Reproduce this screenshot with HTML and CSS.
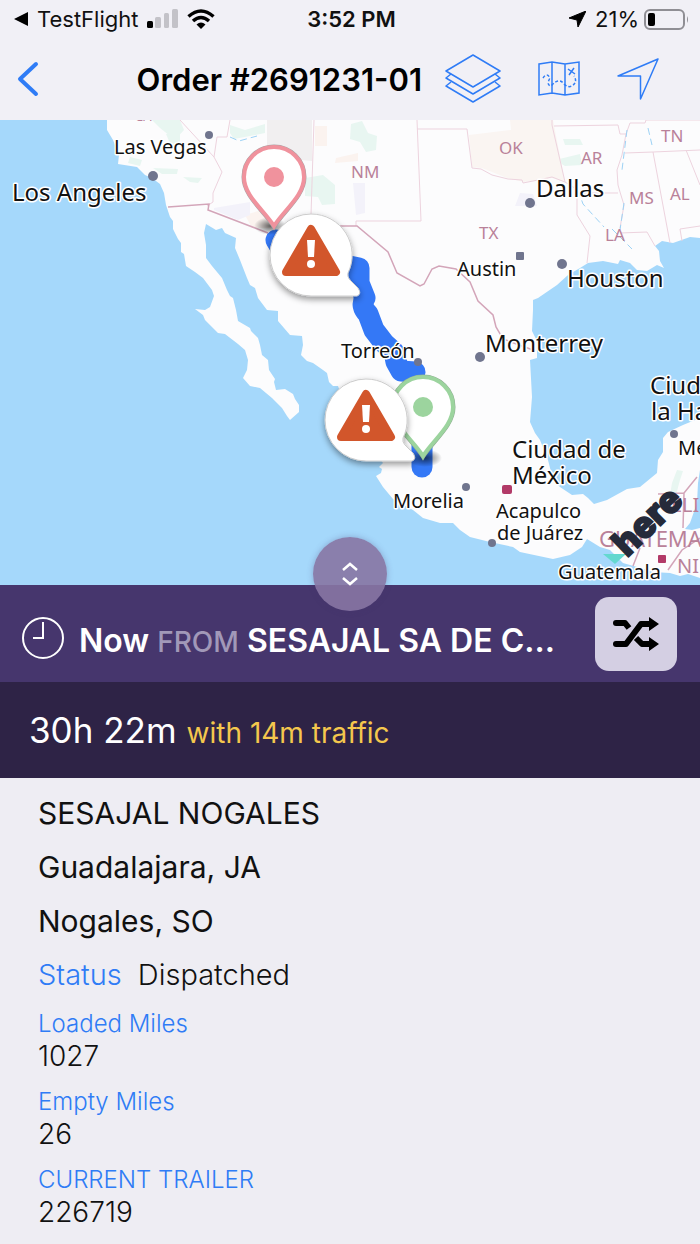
FILE: index.html
```html
<!DOCTYPE html>
<html lang="en">
<head>
    <meta charset="utf-8">
    <meta name="viewport" content="width=device-width, initial-scale=1">
    <title>Order #2691231-01</title>
    <link rel="stylesheet" href="styles.css">
</head>
<body>
    <header class="header">
        <div class="status-bar">
            <div class="status-left">
                <svg width="14" height="14" viewBox="0 0 14 14"><path d="M0 7L14 0V14Z"/></svg>
                <span>TestFlight</span>
                <svg width="31" height="20" viewBox="0 0 31 20">
                    <rect x="0" y="12" width="6" height="7" rx="1.500"/>
                    <g fill="#c3c2c8">
                        <rect x="8" y="8" width="6" height="11" rx="1.500"/>
                        <rect x="17" y="4" width="5" height="15" rx="1.500"/>
                        <rect x="25" y="0" width="6" height="19" rx="1.500"/>
                    </g>
                </svg>
                <svg width="28" height="20" viewBox="0 0 28 20" fill="none" stroke="#000" stroke-width="3.500">
                    <path d="M1.500 7.500Q14 -3.500 26.500 7.500"/>
                    <path d="M6 12Q14 5 22 12"/>
                    <path d="M14 20L9.500 15.500Q14 11.500 18.500 15.500Z" fill="#000" stroke="none"/>
                </svg>
            </div>
            <div class="status-time">3:52 PM</div>
            <div class="status-right">
                <svg width="17" height="16" viewBox="0 0 17 16"><path d="M0 7L17 0L9 16L8 9Z" stroke="#000" stroke-linejoin="round"/></svg>
                <span class="battery">21%
                    <svg width="45" height="21" viewBox="0 0 45 21">
                        <rect x="1" y="1" width="39" height="19" rx="5" fill="none" stroke="#8f8e94" stroke-width="2"/>
                        <rect x="4" y="4" width="7" height="13" rx="2"/>
                        <path d="M43 7Q45 10.500 43 14Z" fill="#8f8e94"/>
                    </svg>
                </span>
            </div>
        </div>
        <nav class="nav">
            <button class="icon-btn" aria-label="Back">
                <svg width="22" height="36" viewBox="0 0 22 36" fill="none" stroke="#2f7cf6" stroke-width="4" stroke-linecap="round" stroke-linejoin="round"><path d="M19 3L3 18L19 33"/></svg>
            </button>
            <h1 class="nav-title">Order #2691231-01</h1>
            <button class="icon-btn" aria-label="Layers">
                <svg width="56" height="50" viewBox="0 0 56 50" fill="none" stroke="#2f7cf6" stroke-width="1.500" stroke-linejoin="round">
                    <path d="M28 1L55 17L28 33L1 17Z"/>
                    <path d="M6 20L1 24L28 40L55 24L50 20"/>
                    <path d="M6 28L1 32L28 48L55 32L50 28"/>
                </svg>
            </button>
            <button class="icon-btn" aria-label="Map">
                <svg width="42" height="36" viewBox="0 0 42 36" fill="none" stroke="#2f7cf6" stroke-width="1.500">
                    <path d="M1 3L14 1L27 3L41 1V32L27 34L14 32L1 34ZM14 1V32M27 3V34"/>
                    <path d="M5 17Q9 11 12 17Q8 24 13 25Q21 16 26 23Q30 27 34 25Q40 21 36 15" stroke-dasharray="3 2"/>
                    <path d="M30 8L37 13M36 7L31 14"/>
                </svg>
            </button>
            <button class="icon-btn" aria-label="Locate">
                <svg width="42" height="42" viewBox="0 0 42 42" fill="none" stroke="#2f7cf6" stroke-width="1.500" stroke-linejoin="round"><path d="M41 1L1 18H23.500V41Z"/></svg>
            </button>
        </nav>
    </header>

    <main>
        <div class="map">
            <svg class="map-canvas" viewBox="0 120 700 465">
                <defs>
                    <filter id="shadow" x="-20%" y="-20%" width="150%" height="150%">
                        <feDropShadow dx="0" dy="3" stdDeviation="3" flood-opacity=".4"/>
                    </filter>
                    <radialGradient id="spot">
                        <stop offset="0" stop-opacity=".6"/>
                        <stop offset="1" stop-opacity="0"/>
                    </radialGradient>
                    <g id="bubble">
                        <path d="M0 -41A41 41 0 0 1 37 18Q36 22 39 25L47 33Q51 39 46 41H0A41 41 0 0 1 0 -41Z" fill="#fff" stroke="#ccc" stroke-width="1" filter="url(#shadow)"/>
                        <path d="M0 -26L25 17H-25Z" fill="#d2562b" stroke="#d2562b" stroke-width="8" stroke-linejoin="round"/>
                        <path d="M-4 -15H4L3 2H-3Z" fill="#fff"/>
                        <circle cx="0" cy="9" r="4" fill="#fff"/>
                    </g>
                    <path id="pin" d="M0 47C-10 31 -30 17 -30 -2A30 30 0 0 1 30 -2C30 17 10 31 0 47Z"/>
                </defs>

                <!-- land -->
                <path class="land" d="M107 119V130L113 140L119 155L118 164L137 167L145 175L152 178L160 184L164 193L166 205L170 217L173 221V229L178 239L181 243V252L184 254L186 266L195 272L203 278L212 290L214 296L210 307L205 310L195 309L203 315L205 320L218 333L225 334L238 344L245 350L248 360L247 370L243 378L250 386L260 388L272 398L282 408L287 416L290 420L299 412V405L295 399L293 394L285 389L276 390L274 382L275 379L269 370L268 360L262 355L260 345L258 338L251 331L250 328L238 321L236 310L233 298L230 296L227 290L222 278L212 266L206 258V245L204 233L206 224L216 230L222 228L225 233L236 238L235 248L240 260L247 278L250 285L255 288L258 298L267 310L278 311V321L290 335L302 336L303 345L301 355L307 361L313 363L323 370L327 373L329 382L333 386H338L350 420L383 463L379 467L382 469L381 473L376 476L383 487L393 499L413 510L423 518L440 523L453 523L460 530L470 537L490 542L513 547L520 552L553 559L570 555L582 547L587 539L600 547L610 550L623 563L637 567L653 572L670 573L680 576L688 574L700 578V528L692 530L685 529L690 523L697 503L698 483L700 470V418L683 425L668 432L663 438V452L658 460L657 473L640 487L627 489L607 500L594 504L588 498L583 494L572 495L560 487L553 480L548 460L540 440L535 433L530 422L532 397L530 360L537 358V341L532 331L533 310V300L538 298L557 285L568 275L580 268L588 263L603 261L618 264L620 260L630 263L637 270L647 271L657 265L664 268L660 261L659 251L655 246L662 241L673 243L690 237L700 238V119Z"/>
                <g fill="#e8f6f1">
                    <path d="M152 120H180L184 130L175 140L160 128Z"/>
                    <path d="M166 134H180V144L172 148Z"/>
                    <path d="M130 157L142 160L140 166L128 163Z"/>
                    <path d="M153 168L178 169L177 174L162 174Z"/>
                    <path d="M183 177L202 178L198 183L190 182Z"/>
                    <path d="M230 125L245 130L265 124V133L250 136L234 139L230 133Z"/>
                    <path d="M351 124L362 121L368 133L377 136L376 150L366 152L360 142L350 139Z"/>
                    <path d="M305 178L323 175L335 185V204L322 205L318 197L305 196Z"/>
                    <path d="M563 139H580L583 145L565 145Z"/>
                    <path d="M555 160L580 154L582 165L565 166Z"/>
                    <path d="M677 470L683 471L680 480L676 495H670L672 483Z"/>
                </g>
                <path d="M267 120H312V161L290 159L267 145Z" fill="#f1eff0"/>
                <path d="M469 135L511 130L510 120H553L565 182L552 178L524 182L507 178L482 168L472 167Z" fill="#faf5f2"/>
                <path d="M315 126H327V146H315ZM336 158L358 153V161L335 163ZM245 215L275 206L270 228H252Z" fill="#fbf3ef"/>
                <path d="M353 183H365V213L356 215ZM214 208L250 202V215L238 220L214 210ZM520 193L533 194L537 206H515Z" fill="#f3f2fa"/>

                <!-- borders -->
                <g class="state-line">
                    <path d="M180 120L214 157L222 172L213 193L213 202L207 206M214 157L217 137H227L230 120"/>
                    <path d="M314 120L311 215V226M417 120L421 221H356V226"/>
                    <path d="M417 129H467L472 168L481 169L492 175L508 179L522 180L523 183L538 180L552 177L565 182L552 125V120"/>
                    <path d="M554 126L618 125L620 134H626L622 155L617 170L618 185L620 192L624 205L620 228M565 182L578 190M577 215L590 236L587 263M577 215V193H618M620 233L647 232L655 246M626 134L630 123H645L646 120H700M625 153L653 152L700 150M653 152L670 243M686 150L700 185M700 226L680 229L682 241"/>
                </g>
                <g class="country-line">
                    <path d="M168 207L209 204L208 210L268 233M340 226H357L388 252L397 273L420 286L424 284L432 269L439 266L456 269L470 282L478 301L493 315L496 327L503 339L533 350"/>
                    <path d="M633 566L640 548M658 494L684 493L683 528M684 493L697 477M668 570L682 550L700 538"/>
                </g>
                <g fill="none" stroke="#9dd2f5" stroke-dasharray="7 4">
                    <path d="M648 128L652 145M627 130L622 170M624 203L620 230M578 190L583 204L604 227M612 229L632 249M230 137L239 141L257 136"/>
                </g>

                <!-- route -->
                <g class="route">
                    <path d="M276 240L285 255L330 262L359 268L359 283L365 298Q360 306 368 314L374 330L384 343L394 352L396 362L401 371L415 372"/>
                    <path d="M422 440V467"/>
                </g>

                <g class="region-text">
                    <text x="135" y="121" font-size="13">CA</text>
                    <text x="351" y="178">NM</text>
                    <text x="499" y="154">OK</text>
                    <text x="581" y="164">AR</text>
                    <text x="661" y="142">TN</text>
                    <text x="479" y="239">TX</text>
                    <text x="605" y="241">LA</text>
                    <text x="629" y="204">MS</text>
                    <text x="670" y="200">AL</text>
                    <text x="599" y="547" font-size="22">GUATEMA</text>
                    <text x="671" y="512" font-size="20">ELI</text>
                    <text x="677" y="573" font-size="20">NI</text>
                </g>
                <g class="city-text">
                    <text x="114" y="154">Las Vegas</text>
                    <text x="457" y="276">Austin</text>
                    <text x="341" y="358">Torreón</text>
                    <text x="393" y="508">Morelia</text>
                    <text x="496" y="518">Acapulco</text>
                    <text x="497" y="540">de Juárez</text>
                    <text x="558" y="579">Guatemala</text>
                    <text x="678" y="455">Mérida</text>
                </g>
                <g class="city-text city-large">
                    <text x="12" y="201">Los Angeles</text>
                    <text x="536" y="197">Dallas</text>
                    <text x="567" y="287">Houston</text>
                    <text x="485" y="352">Monterrey</text>
                    <text x="512" y="458">Ciudad de</text>
                    <text x="512" y="484">México</text>
                    <text x="650" y="394">Ciudad de</text>
                    <text x="651" y="420">la Habana</text>
                </g>
                <g fill="#70758e">
                    <circle cx="209" cy="135" r="4"/>
                    <circle cx="153" cy="176" r="5"/>
                    <circle cx="530" cy="203" r="5"/>
                    <circle cx="562" cy="264" r="5"/>
                    <circle cx="480" cy="357" r="5"/>
                    <circle cx="418" cy="362" r="4"/>
                    <circle cx="466" cy="487" r="4"/>
                    <circle cx="492" cy="543" r="4"/>
                    <circle cx="674" cy="434" r="4"/>
                    <rect x="516" y="252" width="8" height="8" rx="1"/>
                </g>
                <g fill="#b23a68">
                    <rect x="502" y="485" width="10" height="9" rx="2"/>
                    <rect x="658" y="555" width="8" height="8" rx="1"/>
                </g>

                <!-- origin and destination pins -->
                <ellipse cx="270" cy="226" rx="16" ry="9" fill="url(#spot)"/>
                <g transform="translate(274 179)">
                    <use href="#pin" stroke="#a9a3a5" stroke-width="5"/>
                    <use href="#pin" fill="#fff" stroke="#f0929d" stroke-width="4"/>
                    <circle cy="-2" r="10" fill="#f0929d"/>
                </g>
                <ellipse cx="425" cy="458" rx="17" ry="9" fill="url(#spot)"/>
                <g transform="translate(423 409)">
                    <use href="#pin" stroke="#8fae92" stroke-width="5"/>
                    <use href="#pin" fill="#fff" stroke="#9cd49e" stroke-width="4"/>
                    <circle cy="-2" r="10" fill="#9cd49e"/>
                </g>
                <use href="#bubble" x="311" y="255"/>
                <use href="#bubble" x="366" y="420"/>

                <!-- map provider logo -->
                <path d="M603 554H626L615 564Z" fill="#64d8cf"/>
                <text class="here-logo" transform="translate(627 558) rotate(-44)">here</text>
            </svg>
            <button class="resize-btn" aria-label="Resize map">
                <svg width="16" height="24" viewBox="0 0 16 24" fill="none" stroke="#fff" stroke-width="2.500"><path d="M1 8L8 2L15 8M1 16L8 22L15 16"/></svg>
            </button>
        </div>

        <section class="trip">
            <svg class="trip-clock" width="42" height="42" viewBox="0 0 42 42" fill="none" stroke="#fff" stroke-width="2"><circle cx="21" cy="21" r="20"/><path d="M21 5V21H11"/></svg>
            <div class="trip-text">Now <span class="trip-from">FROM</span> SESAJAL SA DE C...</div>
            <button class="shuffle-btn" aria-label="Swap route">
                <svg width="46" height="36" viewBox="0 0 46 36" fill="none" stroke="#000" stroke-width="6" stroke-linejoin="round">
                    <path d="M3 7H12L16 12M23 22L29 28H37" />
                    <path d="M3 28H13L28 8H37"/>
                    <circle cx="3" cy="7" r="3" fill="#000" stroke="none"/>
                    <circle cx="3" cy="28" r="3" fill="#000" stroke="none"/>
                    <path d="M36 1L46 8L36 15ZM36 21L46 28L36 35Z" fill="#000" stroke="none"/>
                </svg>
            </button>
        </section>
        <section class="eta">
            <span class="eta-time">30h 22m</span>
            <span class="eta-traffic">with 14m traffic</span>
        </section>

        <section class="details">
            <p class="row">SESAJAL NOGALES</p>
            <p class="row">Guadalajara, JA</p>
            <p class="row">Nogales, SO</p>
            <p class="row row-status"><span class="blue">Status</span><span>Dispatched</span></p>
            <dl class="fields">
                <dt>Loaded Miles</dt>
                <dd>1027</dd>
                <dt>Empty Miles</dt>
                <dd>26</dd>
                <dt>CURRENT TRAILER</dt>
                <dd>226719</dd>
            </dl>
        </section>
    </main>
</body>
</html>
```

FILE: styles.css
```css
* {
    box-sizing: border-box;
}
body {
    margin: 0;
    background: #eeedf3;
    color: #111;
    font-family: Inter, "Liberation Sans", sans-serif;
}
button {
    padding: 0;
    border: none;
    background: none;
    cursor: pointer;
}
svg {
    display: block;
}
.header {
    background: #f1f0f6;
}
.status-bar {
    display: grid;
    grid-template-columns: 1fr auto 1fr;
    align-items: center;
    height: 38px;
    padding: 0 11px 0 14px;
    font-size: 22px;
}
.status-left,
.status-right {
    display: flex;
    align-items: center;
    gap: 9px;
}
.status-right {
    justify-content: flex-end;
}
.battery {
    display: flex;
    align-items: center;
    gap: 5px;
}
.status-time {
    font-weight: 600;
}
.nav {
    display: flex;
    align-items: center;
    height: 82px;
    padding: 0 41px 0 17px;
}
.nav-title {
    flex: 1;
    margin: 0 23px 0 0;
    color: #000;
    font-size: 31px;
    font-weight: 600;
    text-align: right;
    white-space: nowrap;
}
.icon-btn + .icon-btn {
    margin-left: 37px;
}
.map {
    position: relative;
}
.map-canvas {
    width: 100%;
    background: #a5d8fb;
}
.land {
    fill: #fcfcfd;
}
.state-line {
    fill: none;
    stroke: #edd3de;
}
.country-line {
    fill: none;
    stroke: #d3a5b9;
    stroke-width: 1.5;
}
.route {
    fill: none;
    stroke: #3478f6;
    stroke-width: 21;
    stroke-linecap: round;
    stroke-linejoin: round;
}
.region-text {
    fill: #b98199;
    font-family: "Noto Sans", sans-serif;
    font-size: 17px;
}
.city-text {
    fill: #111;
    stroke: #fff;
    stroke-width: 3px;
    stroke-linejoin: round;
    paint-order: stroke;
    font-family: "Noto Sans", sans-serif;
    font-size: 20px;
}
.city-large {
    font-size: 24px;
}
.here-logo {
    fill: #252a3a;
    stroke: #252a3a;
    stroke-width: 2px;
    font-size: 36px;
    font-weight: 800;
}
.resize-btn {
    position: absolute;
    left: 50%;
    bottom: -26px;
    display: flex;
    align-items: center;
    justify-content: center;
    width: 74px;
    height: 74px;
    margin-left: -37px;
    border-radius: 50%;
    background: rgba(135, 118, 163, 0.9);
    box-shadow: 0 0 6px rgba(70, 54, 109, 0.3);
}
.trip {
    display: flex;
    align-items: center;
    height: 97px;
    padding: 0 23px 0 22px;
    background: #46366d;
    color: #fff;
}
.trip-clock {
    margin-top: 8px;
}
.trip-text {
    flex: 1;
    margin: 14px 0 0 15px;
    font-size: 32px;
    font-weight: 600;
    white-space: nowrap;
}
.trip-from {
    color: #a198b8;
    font-size: 28px;
    font-weight: 500;
}
.shuffle-btn {
    display: flex;
    align-items: center;
    justify-content: center;
    width: 82px;
    height: 74px;
    border-radius: 14px;
    background: #d4cfe3;
}
.eta {
    display: flex;
    align-items: baseline;
    gap: 10px;
    height: 96px;
    padding: 0 29px;
    background: #2e2346;
    line-height: 96px;
}
.eta-time {
    color: #fff;
    font-size: 35px;
}
.eta-traffic {
    color: #f4c74d;
    font-size: 28px;
}
.details {
    padding: 8px 38px 14px;
}
.row {
    margin: 0;
    font-size: 30px;
    line-height: 54px;
}
.row-status {
    display: flex;
    gap: 16px;
    font-size: 29px;
    font-weight: 300;
}
.blue,
.fields dt {
    color: #2f7cf6;
}
.fields {
    margin: 6px 0 0;
    font-weight: 300;
}
.fields dt {
    font-size: 24px;
    line-height: 32px;
}
.fields dd {
    margin: 0 0 14px;
    font-size: 28px;
    line-height: 32px;
}
.fields dd:last-child {
    margin-bottom: 0;
}
```
